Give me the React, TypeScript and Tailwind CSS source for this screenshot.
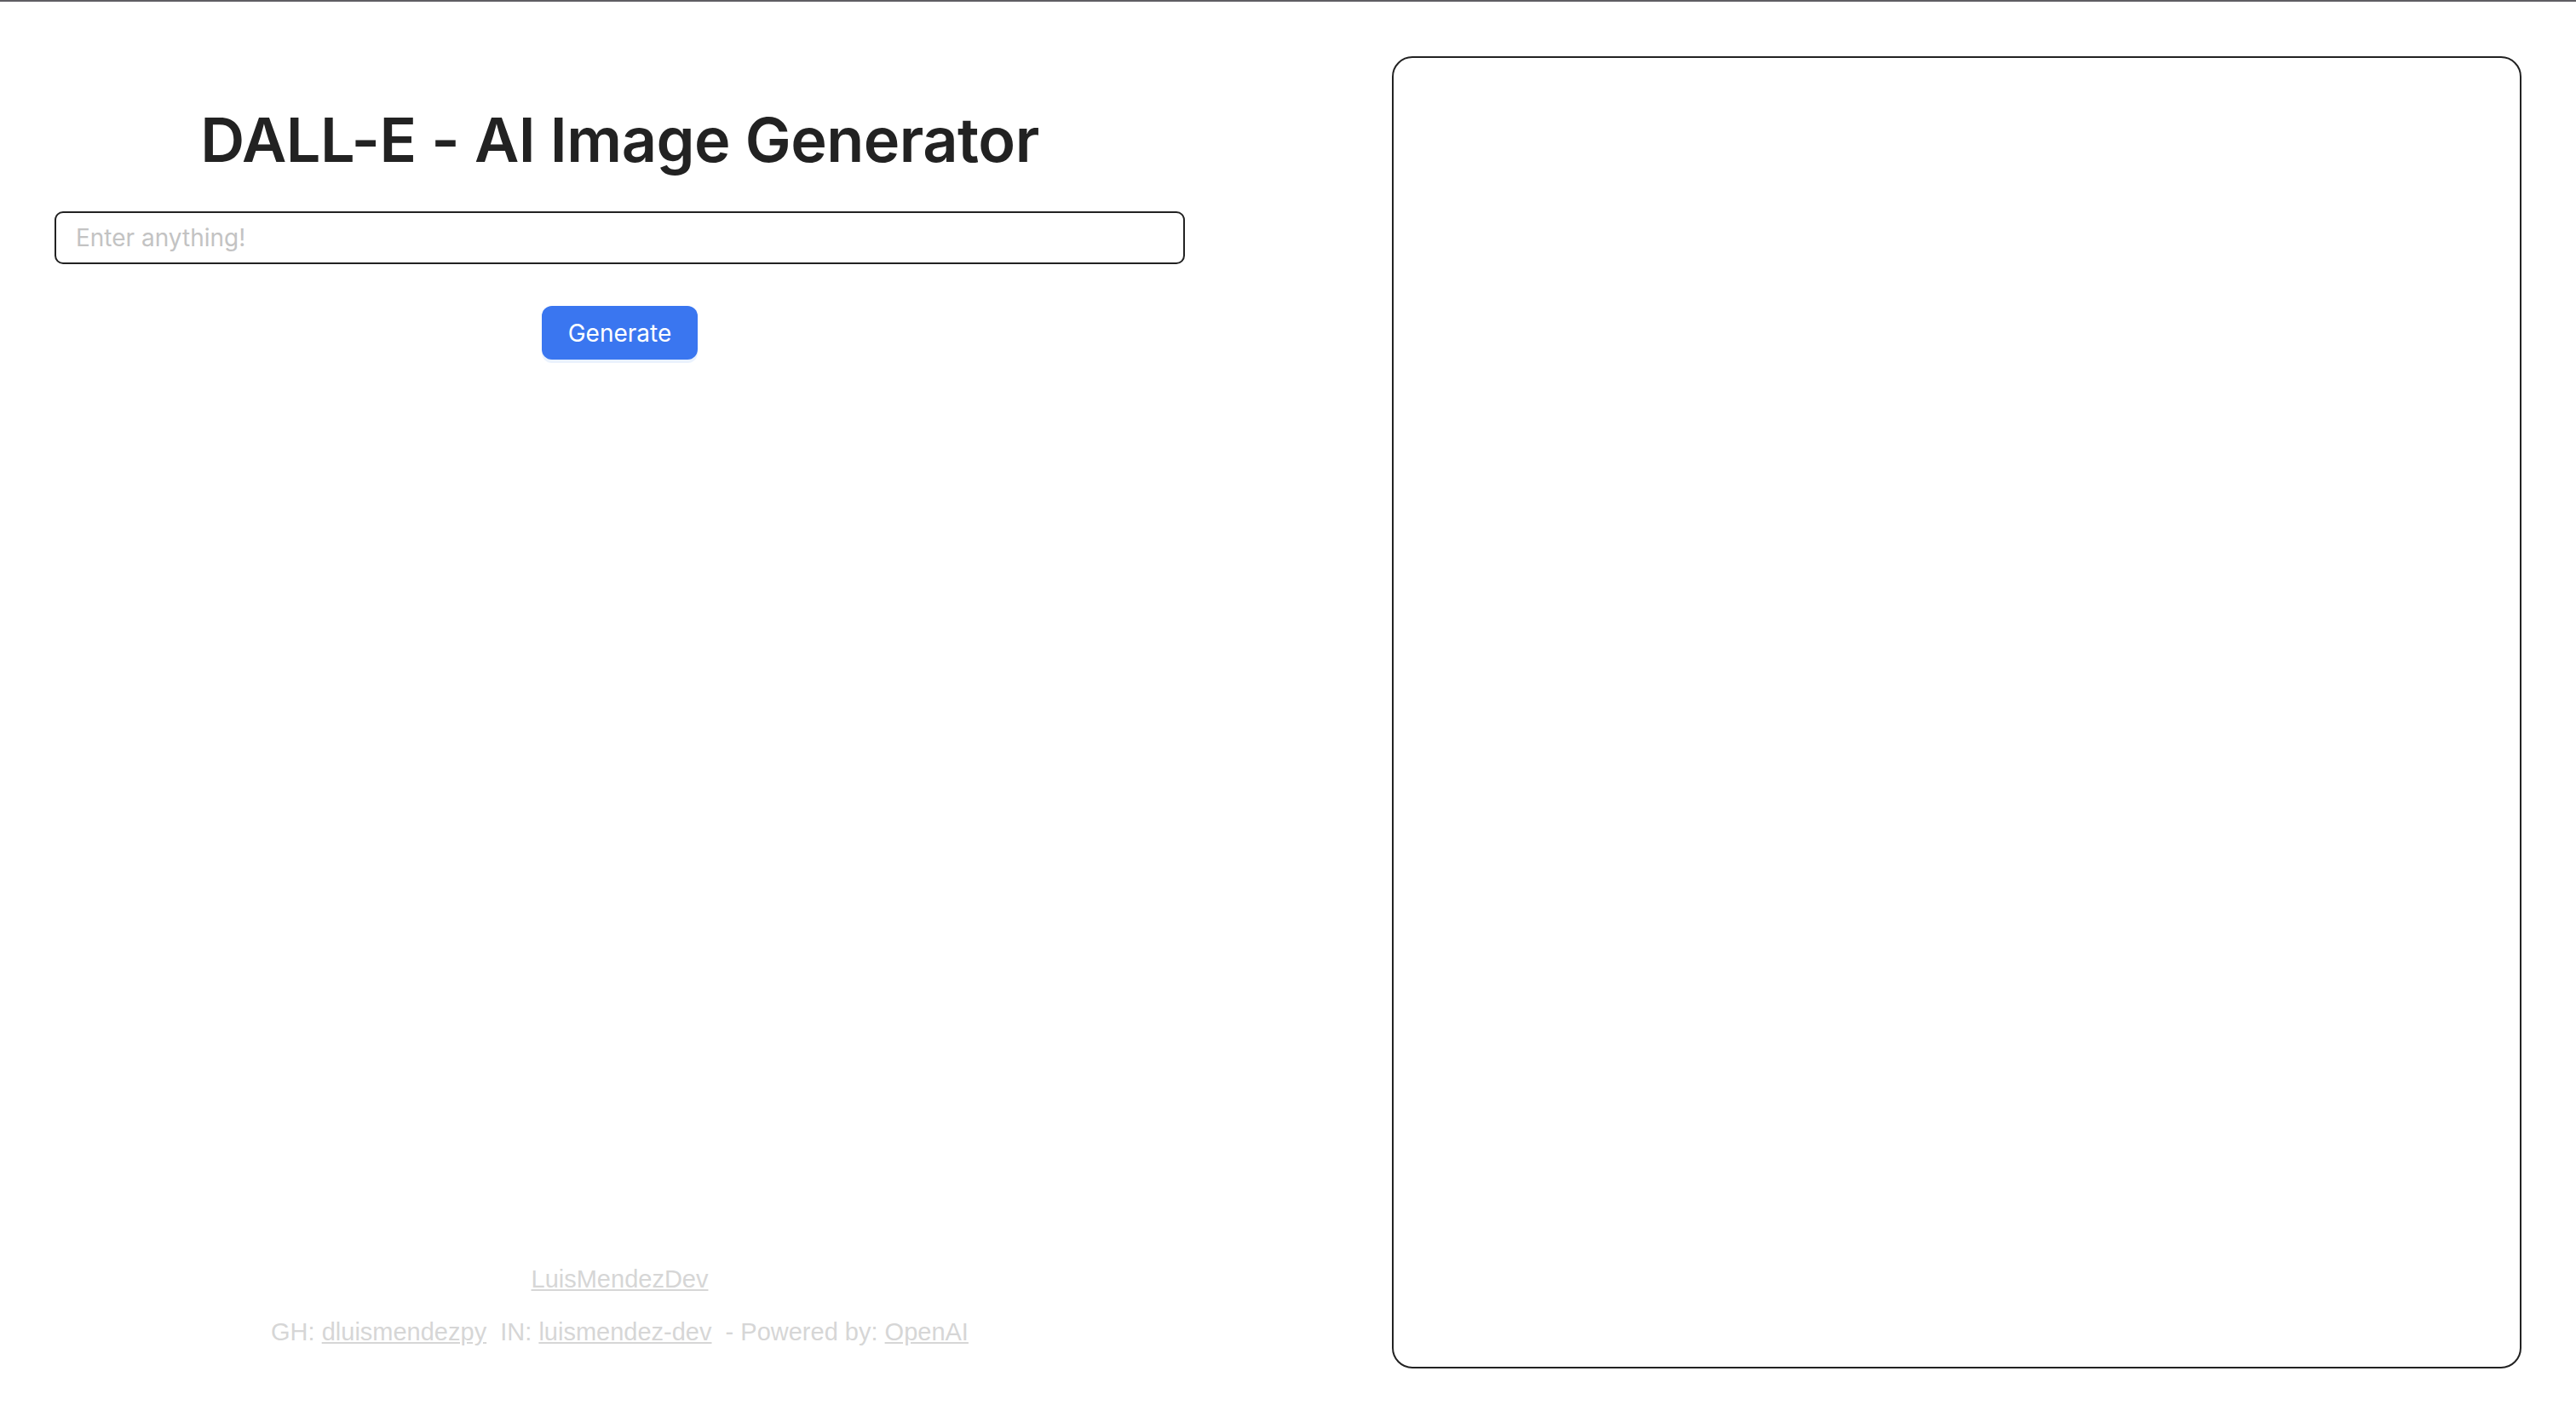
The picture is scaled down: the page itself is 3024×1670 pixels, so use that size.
import React from 'react'

const App = () => {
    return (
        <div className="w-[3024px] h-[1670px] bg-white border-t-2 border-[#5f5e63] flex justify-between px-[64px] py-[64px] font-['Inter',sans-serif]">
            <div className="w-[1327px] flex flex-col items-center">
                <h1 className="mt-[62px] text-[72px] leading-none font-semibold text-[#222222] tracking-[-0.5px]">
                    DALL-E - AI Image Generator
                </h1>
                <input
                    type="text"
                    placeholder="Enter anything!"
                    className="mt-[48px] w-full h-[62px] rounded-[10px] border-2 border-[#222222] px-[23px] text-[28px] text-[#222222] placeholder:text-[#c3c3c3] outline-none"
                />
                <button className="mt-[49px] w-[183px] h-[63px] rounded-[12px] bg-[#3a76f0] text-white text-[28px] shadow-[0_4px_0_#eaf2fd]">
                    Generate
                </button>

                <div className="mt-auto mb-[22px] flex flex-col items-center gap-[20px] text-[29px] leading-[42px] text-[#d6d6d6] font-['Liberation_Sans',sans-serif]">
                    <a href="#" className="underline">LuisMendezDev</a>
                    <p>
                        GH: <a href="#" className="underline">dluismendezpy</a>&nbsp; IN: <a href="#" className="underline">luismendez-dev</a>&nbsp; - Powered by: <a href="#" className="underline">OpenAI</a>
                    </p>
                </div>
            </div>

            <div className="w-[1326px] rounded-[24px] border-2 border-[#222222]"></div>
        </div>
    )
}

export default App
